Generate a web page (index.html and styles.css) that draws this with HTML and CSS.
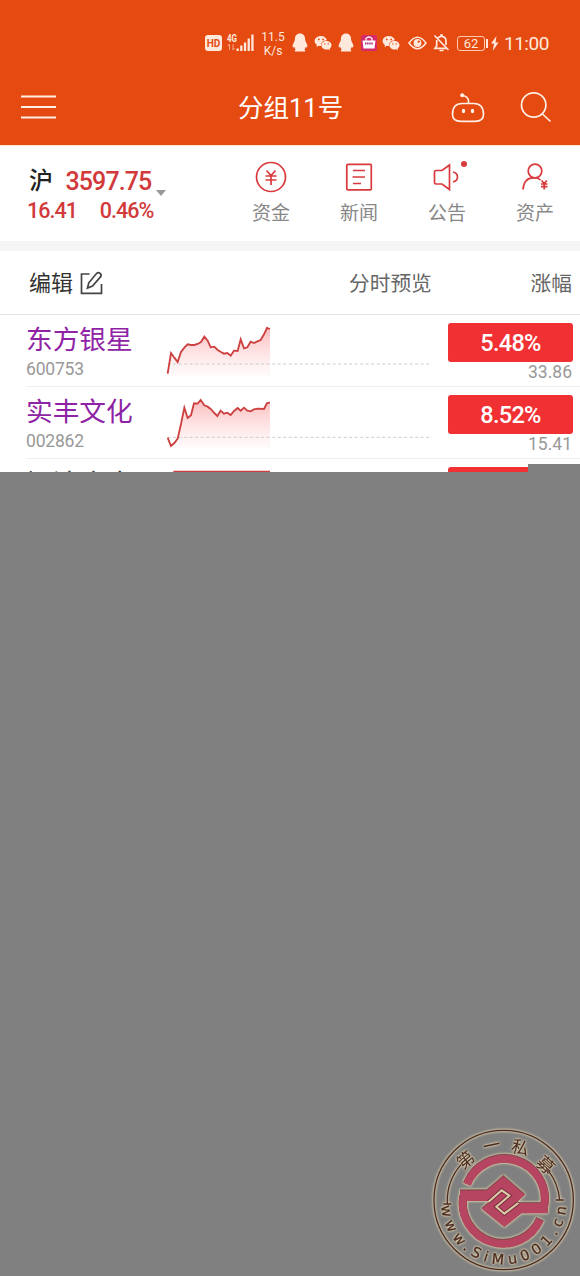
FILE: index.html
```html
<!DOCTYPE html>
<html lang="zh-CN">

<head>
  <meta charset="UTF-8">
  <meta name="viewport" content="width=device-width, initial-scale=1.0">
  <title>分组11号</title>
  <link rel="stylesheet" href="styles.css">
</head>

<body>

  <!-- Shared shapes -->
  <svg class="defs" width="0" height="0">
    <defs>
      <linearGradient id="fade" x1="0" y1="0" x2="0" y2="1">
        <stop offset="0" stop-color="#fbbcbc"/>
        <stop offset="1" stop-color="#fff5f7" stop-opacity="0.5"/>
      </linearGradient>
      <symbol id="qq" viewBox="0 0 16 20">
        <path d="M8 .5C4.600.5 2.800 3 2.900 6.500 2.900 8.500.8 10.500.6 13c-.1 1.600.8 1.800 1.600.7.200 1.200.8 2 1.500 2.700-1 .5-1.200 1.300-.6 2.200h9.800c.6-.9.4-1.700-.6-2.200.7-.7 1.300-1.500 1.500-2.700.8 1.100 1.700.9 1.600-.7-.2-2.500-2.300-4.500-2.300-6.500C13.200 3 11.400.5 8 .5z"/>
      </symbol>
      <symbol id="wechat" viewBox="0 0 18 16">
        <path fill-rule="evenodd" d="M7 1C3.400 1 .6 3.200.6 6c0 1.600.9 2.900 2.300 3.900L2.400 12l2.200-1.200c.8.2 1.500.3 2.400.3C6.500 7.500 9 5.300 12.900 5.200 12.300 2.700 10 1 7 1zM4.800 3.500a.9.9 0 1 1 0 1.800.9.9 0 0 1 0-1.800zm4.300 0a.9.9 0 1 1 0 1.800.9.9 0 0 1 0-1.800z"/>
        <path fill-rule="evenodd" d="M12.500 6c-2.900 0-5.100 1.900-5.100 4.200s2.200 4.300 5.100 4.300c.6 0 1.200-.1 1.800-.3l1.700 1-.4-1.700c1.200-.8 1.900-1.900 1.900-3.300C17.500 7.900 15.300 6 12.500 6zm-1.700 2.200a.7.7 0 1 1 0 1.400.7.7 0 0 1 0-1.400zm3.400 0a.7.7 0 1 1 0 1.400.7.7 0 0 1 0-1.400z"/>
      </symbol>
    </defs>
  </svg>

  <header>
    <div class="status">
      <span class="hd">HD</span>
      <svg class="signal" width="28" height="20" viewBox="0 0 28 20">
        <text x="0" y="8.500" textLength="10" lengthAdjust="spacingAndGlyphs">4G</text>
        <path class="dim" d="M2.500 11v6M1 13l1.500-2M6 11v6l1.500-2"/>
        <path d="M9.500 15.500h2.300V18H9.500zM13.200 12.500h2.300V18h-2.300zM16.900 9.500h2.300V18h-2.300zM20.600 5.500h2.300V18h-2.300zM24.300 1.500h2.300V18h-2.300z"/>
      </svg>
      <span class="speed">11.5<br>K/s</span>
      <svg class="qq" width="16" height="20"><use href="#qq"/></svg>
      <svg class="wechat" width="18" height="16"><use href="#wechat"/></svg>
      <svg class="qq" width="16" height="20"><use href="#qq"/></svg>
      <svg class="mall" width="16" height="16" viewBox="0 0 16 16">
        <rect width="16" height="16" rx="2.500" fill="#d52b6d"/>
        <path d="M5 6V3.500Q8 .5 11 3.500V6" fill="none" stroke="#fff" stroke-width="1.200"/>
        <path d="M1.500 5.500h13l-1 8h-11z" fill="#fff"/>
        <path d="M4 8.500h8" stroke="#b03080" stroke-width="2" stroke-dasharray="1.500 .6"/>
      </svg>
      <svg class="wechat" width="18" height="16"><use href="#wechat"/></svg>
      <svg class="eye" width="19" height="14" viewBox="0 0 19 14">
        <path d="M1 7Q9.500-4.500 18 7 9.500 18.500 1 7z" fill="none" stroke="#ffe9dd" stroke-width="1.500"/>
        <circle cx="9.500" cy="7" r="3.900"/>
        <circle cx="10.800" cy="5.600" r="1.200" fill="#e54a10"/>
      </svg>
      <svg class="bell" width="17" height="18" viewBox="0 0 17 18">
        <path d="M5 4Q6 2.500 8 2.300V1h1v1.300q4 .6 4 5V11M3.700 6v6L2 14.300h11M6.500 16.500h4M1.500 1.500l14 14.500" fill="none" stroke="#ffe9dd" stroke-width="1.700"/>
      </svg>
      <span class="battery">62</span>
      <svg class="bolt" width="8" height="15" viewBox="0 0 8 15">
        <path d="M5.500 0L0 7.500h3L1.800 15 7.500 6.500h-3z"/>
      </svg>
      <span class="time">11:00</span>
    </div>

    <div class="titlebar">
      <svg class="menu" width="36" height="26" viewBox="0 0 36 26">
        <path d="M0 2.500h35M0 13h35M0 23.500h35"/>
      </svg>
      <h1>分组11号</h1>
      <svg class="robot" width="34" height="32" viewBox="0 0 34 32">
        <path d="M11 12.500H23Q32.500 12.500 32.500 23.500 32.500 30.300 24 30.300H10Q1.500 30.300 1.500 23.500 1.500 12.500 11 12.500z"/>
        <path d="M17.500 12V9.500Q17 5.500 11.500 4.500"/>
        <g class="solid"><circle cx="11.200" cy="4.200" r="2"/><ellipse cx="12.500" cy="20" rx="1.700" ry="2.200"/><ellipse cx="21.500" cy="20" rx="1.700" ry="2.200"/></g>
      </svg>
      <svg class="search" width="32" height="32" viewBox="0 0 32 32">
        <circle cx="13.700" cy="14" r="12.200"/>
        <path d="M22 22.500l8.500 8"/>
      </svg>
    </div>
  </header>

  <section class="summary">
    <div class="index">
      <div class="index-top"><span class="market">沪</span><span class="points">3597.75</span><i class="arrow"></i></div>
      <div class="index-bottom"><span>16.41</span><span>0.46%</span></div>
    </div>
    <nav>
      <a>
        <svg width="34" height="34" viewBox="0 0 34 34">
          <circle cx="17" cy="17" r="14.500"/>
          <path d="M12.500 10.500l4.500 5 4.500-5M11.500 16h11M11.500 20h11M17 15.500V25"/>
        </svg>
        资金
      </a>
      <a>
        <svg width="34" height="34" viewBox="0 0 34 34">
          <rect x="4.800" y="4.300" width="24.500" height="25.500" rx="1"/>
          <path d="M11 10.500h12M10.500 17h12.500M11 23.500h8"/>
        </svg>
        新闻
      </a>
      <a>
        <svg width="34" height="34" viewBox="0 0 34 34">
          <path d="M4.500 12Q4.500 10.500 6 10.500h6L19.500 5v24.500L12 24H6Q4.500 24 4.500 22.500zM23 12q4.500 1 4.500 5T23 22"/>
          <circle class="dot" cx="34" cy="4" r="3"/>
        </svg>
        公告
      </a>
      <a>
        <svg width="34" height="34" viewBox="0 0 34 34">
          <circle cx="17" cy="11" r="6.800"/>
          <path d="M5 29.500Q6 18 15 17.800q5-.3 7.500 2.200"/>
          <path d="M23.500 20.500l2.700 3 2.700-3M23 24h6.500M23 26.700h6.500M26.200 23.500v6"/>
        </svg>
        资产
      </a>
    </nav>
  </section>

  <section class="columns">
    <span class="edit">编辑
      <svg width="24" height="24" viewBox="0 0 24 24">
        <path d="M9.500 3H1.500v19.300h20V13"/>
        <path d="M7.500 17l1.300-5.200L16.500 2.500q1.800-1.700 3.600-.2 1.800 1.600.4 3.600L12.500 15z"/>
      </svg>
    </span>
    <span class="preview">分时预览</span>
    <span class="change">涨幅</span>
  </section>

  <main>
    <div class="stock">
      <div class="name"><b>东方银星</b><small>600753</small></div>
      <svg class="chart" viewBox="0 15 870 216">
        <path class="area" d="M53 191L63 129 73 143 83 156 93 126 103 113 113 103 123 105 133 105 143 102 153 96 163 80 173 92 182 112 193 110 203 120 213 126 222 131 232 129 242 137 252 122 263 123 272 88 282 115 292 112 302 95 312 99 322 94 332 90 342 73 351 54 360 57V198H53z"/>
        <path class="base" d="M53 162H846"/>
        <path class="line" d="M53 191L63 129 73 143 83 156 93 126 103 113 113 103 123 105 133 105 143 102 153 96 163 80 173 92 182 112 193 110 203 120 213 126 222 131 232 129 242 137 252 122 263 123 272 88 282 115 292 112 302 95 312 99 322 94 332 90 342 73 351 54 360 57"/>
      </svg>
      <div class="rate"><strong>5.48%</strong><span>33.86</span></div>
    </div>
    <div class="stock">
      <div class="name"><b>实丰文化</b><small>002862</small></div>
      <svg class="chart" viewBox="0 231 870 216">
        <path class="area" d="M53 383L63 408 73 399 83 386 93 342 103 293 113 324 123 316 132 280 143 281 152 270 163 286 173 290 182 297 193 309 202 318 212 302 222 311 232 308 242 315 252 303 263 294 272 302 282 293 292 302 302 304 312 298 322 296 342 297 351 279 360 278V414H53z"/>
        <path class="base" d="M53 382H846"/>
        <path class="line" d="M53 383L63 408 73 399 83 386 93 342 103 293 113 324 123 316 132 280 143 281 152 270 163 286 173 290 182 297 193 309 202 318 212 302 222 311 232 308 242 315 252 303 263 294 272 302 282 293 292 302 302 304 312 298 322 296 342 297 351 279 360 278"/>
      </svg>
      <div class="rate"><strong>8.52%</strong><span>15.41</span></div>
    </div>
    <div class="stock">
      <div class="name plain"><b>福达合金</b></div>
      <svg class="chart" viewBox="0 447 870 216">
        <path class="line" d="M70 485H360"/>
      </svg>
      <div class="rate"><strong></strong></div>
    </div>
  </main>

  <div class="blank">
    <svg class="seal" width="155" height="156" viewBox="0 0 465 468">
      <circle class="ink" cx="236" cy="240" r="209"/>
      <path class="ink" d="M67 252A168 168 0 0 1 108 134M404 240A168 168 0 0 0 370 152M55 252h24M392 240h24"/>
      <g class="mark">
        <path class="ring" d="M126 193A121 121 0 0 1 357 262M345 299A121 121 0 0 1 115 230"/>
        <path class="body" d="M105 211H185L235 168 300 224 273 249H368V280H290L238 321 170 266 197 243H105z"/>
        <path class="groove dark" d="M190 246L230 211 253 227 214 260 238 281 280 249"/>
        <path class="groove" d="M190 246L230 211 253 227 214 260 238 281 280 249"/>
      </g>
      <g class="top">
        <text transform="translate(122 120) rotate(-40)" y="18">第</text>
        <text transform="translate(200 77) rotate(-12)" y="18">一</text>
        <text transform="translate(285 83) rotate(14)" y="18">私</text>
        <text transform="translate(361 136) rotate(42)" y="18">募</text>
      </g>
      <path id="rim" fill="none" d="M48 245A188 188 0 0 0 424 245"/>
      <text class="site"><textPath href="#rim" startOffset="13" textLength="562">www.SiMu001.cn</textPath></text>
    </svg>
  </div>

</body>

</html>
```
FILE: styles.css
```css
body {
  font-family: Roboto, "Noto Sans CJK SC", sans-serif;
  margin: 0;
  min-height: 1276px;
  display: flex;
  flex-direction: column;
  background-color: #fff;
  color: #333;
}

svg {
  display: block;
  flex: none;
  overflow: visible;
}

.defs {
  position: absolute;
}

/* Header */
header {
  height: 145px;
  background-color: #e54a10;
  color: #fff;
}

.status {
  display: flex;
  align-items: center;
  height: 62px;
  padding: 12px 0 0 205px;
  color: #ffe9dd;
  fill: #ffe9dd;
}

.hd {
  width: 17px;
  height: 16px;
  border-radius: 3px;
  background-color: #ffe9dd;
  color: #e54a10;
  font-size: 10px;
  font-weight: bold;
  line-height: 17px;
  text-align: center;
}

.signal {
  margin: 0 6px 0 5px;
}

.signal text {
  font-size: 10px;
  font-weight: bold;
}

.signal .dim {
  fill: none;
  stroke: #f5a98a;
}

.speed {
  width: 24px;
  margin-right: 7px;
  padding-top: 1px;
  font-size: 12px;
  line-height: 14px;
  text-align: center;
}

.wechat {
  margin: 0 6px 0 5.5px;
}

.mall {
  margin-left: 7px;
}

.eye {
  margin: 0 6px 0 2px;
}

.battery {
  position: relative;
  box-sizing: border-box;
  width: 28px;
  height: 15px;
  margin-left: 7px;
  border: 1px solid #ffc9ae;
  border-radius: 3px;
  font-size: 13px;
  line-height: 14px;
  text-align: center;
}

.battery::after {
  content: "";
  position: absolute;
  top: 2px;
  right: -4px;
  width: 2px;
  height: 9px;
  background-color: #ffe9dd;
}

.bolt {
  margin: 0 5px 0 6px;
}

.time {
  font-size: 19px;
  letter-spacing: -0.5px;
}

.titlebar {
  display: grid;
  grid-template-columns: 217px 146px 1fr auto auto;
  align-items: center;
  height: 66px;
  padding: 0 28px 0 21px;
  fill: none;
  stroke: #ffefe6;
  stroke-width: 1.7;
}

.menu {
  stroke-width: 2;
}

h1 {
  margin: 2px 0 0;
  font-size: 25.5px;
  font-weight: normal;
  line-height: 36px;
  white-space: nowrap;
}

.robot {
  grid-column: 4;
  margin-right: 35px;
}

.robot .solid {
  fill: #ffefe6;
  stroke: none;
}

/* Market index and shortcuts */
.summary {
  display: flex;
  justify-content: space-between;
  box-sizing: border-box;
  height: 106px;
  padding: 14px 1px 0 27px;
  border-top: 1px solid #ffe6d0;
  border-bottom: 10px solid #f5f5f5;
}

.index {
  color: #d2393b;
  font-weight: 500;
}

.index-top {
  display: flex;
  align-items: center;
  height: 41px;
}

.market {
  width: 38.5px;
  padding-left: 2px;
  box-sizing: border-box;
  font-size: 24px;
  line-height: 30px;
  margin-top: 1px;
  color: #222;
}

.points {
  margin-top: 1px;
  font-size: 25px;
  letter-spacing: -0.9px;
}

.arrow {
  margin: 25px 0 0 5px;
  border: 5.5px solid transparent;
  border-top: 6px solid #999;
  border-bottom: 0;
}

.index-bottom {
  display: flex;
  gap: 23px;
  font-size: 21.5px;
  line-height: 19px;
  letter-spacing: -1px;
}

nav {
  display: flex;
}

nav a {
  display: flex;
  flex-direction: column;
  align-items: center;
  width: 88px;
  font-size: 19px;
  line-height: 40px;
  color: #888;
}

nav svg {
  fill: none;
  stroke: #d9393c;
  stroke-width: 1.7;
}

nav .dot {
  fill: #d9393c;
  stroke: none;
}

/* Column titles */
.columns {
  display: flex;
  align-items: center;
  box-sizing: border-box;
  height: 64px;
  padding: 0 8px 0 29px;
  border-bottom: 1px solid #e4e4e4;
  font-size: 20.7px;
  line-height: 34px;
  color: #666;
}

.edit {
  display: flex;
  align-items: center;
  gap: 7px;
  width: 320px;
  padding-top: 2px;
  font-size: 22px;
  color: #333;
}

.edit svg {
  margin-top: -2px;
  fill: none;
  stroke: #444;
  stroke-width: 1.7;
}

.preview,
.change {
  margin-top: 2px;
}

.change {
  margin-left: auto;
}

/* Stock list */
main {
  height: 157px;
  overflow: hidden;
}

.stock {
  display: grid;
  grid-template-columns: 124px 290px 1fr;
  box-sizing: border-box;
  height: 72px;
  margin-left: 26px;
  padding-right: 7px;
  border-bottom: 1px solid #f0f0f0;
}

.name b {
  display: block;
  padding-top: 6px;
  font-size: 26.700px;
  font-weight: normal;
  line-height: 38px;
  color: #8e24a5;
  white-space: nowrap;
}

.name.plain b {
  color: #333;
}

.name small {
  display: block;
  font-size: 17.5px;
  line-height: 21px;
  letter-spacing: -0.2px;
  color: #999;
}

.chart {
  width: 290px;
  height: 72px;
}

.area {
  fill: url(#fade);
}

.line {
  fill: none;
  stroke: #cd4040;
  stroke-width: 5.5;
}

.base {
  stroke: #ccc;
  stroke-width: 3;
  stroke-dasharray: 9 7.500;
}

.rate {
  padding: 8px 0 0 8px;
  text-align: right;
}

.rate strong {
  display: block;
  height: 39px;
  border-radius: 3px;
  background-color: #f03033;
  color: #fff;
  font-size: 23.5px;
  font-weight: 500;
  line-height: 40px;
  letter-spacing: -0.7px;
  text-align: center;
}

.rate span {
  display: block;
  padding-right: 1px;
  font-size: 17.5px;
  line-height: 21px;
  color: #999;
}

/* Empty area below the list */
.blank {
  position: relative;
  display: flex;
  flex: 1;
  align-items: flex-end;
  justify-content: flex-end;
  background-color: #808080;
}

.blank::before {
  content: "";
  position: absolute;
  top: -8px;
  right: 0;
  width: 52px;
  height: 8px;
  background-color: #808080;
}

.seal {
  overflow: hidden;
  filter: drop-shadow(0 0 1px #d8cba6) drop-shadow(0 0 1px #d8cba6);
}

.seal .ink {
  fill: none;
  stroke: #4a2a24;
  stroke-width: 4;
}

.seal .ring {
  fill: none;
  stroke: #b54560;
  stroke-width: 24;
}

.seal .body {
  fill: #b54560;
}

.seal .mark {
  filter: drop-shadow(0 -2px 1px #5a2530);
}

.seal .groove {
  fill: none;
  stroke: #ddd0a8;
  stroke-width: 6;
}

.seal .dark {
  stroke: #7a2f42;
  stroke-width: 12;
}

.seal .top {
  fill: #4a2a24;
  font-family: "Noto Sans CJK SC", sans-serif;
  font-size: 52px;
  text-anchor: middle;
}

.seal .site {
  fill: #4a2a24;
  stroke: #4a2a24;
  stroke-width: 0.8;
  font-family: "DejaVu Sans", sans-serif;
  font-size: 43px;
}
```
